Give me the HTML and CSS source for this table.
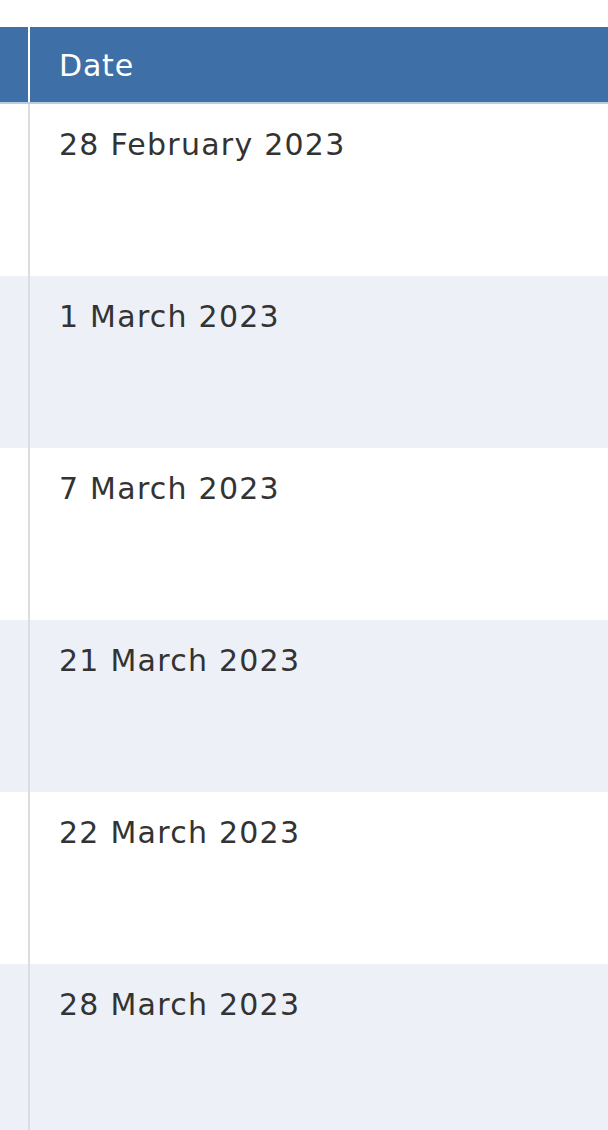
FILE: index.html
```html
<!DOCTYPE html>
<html>
<head>
<meta charset="utf-8">
<link rel="stylesheet" href="styles.css">
</head>
<body>
<div class="page">
  <div class="table">
    <div class="row head">
      <div class="lead"></div>
      <div class="cell">Date</div>
    </div>
    <div class="row"><div class="lead"></div><div class="cell">28 February 2023</div></div>
    <div class="row alt"><div class="lead"></div><div class="cell">1 March 2023</div></div>
    <div class="row"><div class="lead"></div><div class="cell">7 March 2023</div></div>
    <div class="row alt"><div class="lead"></div><div class="cell">21 March 2023</div></div>
    <div class="row"><div class="lead"></div><div class="cell">22 March 2023</div></div>
    <div class="row alt"><div class="lead"></div><div class="cell">28 March 2023</div></div>
  </div>
</div>
</body>
</html>
```
FILE: styles.css
```css
html, body { margin: 0; padding: 0; background: #fff; }
body { font-family: "DejaVu Sans", Verdana, sans-serif; color: #333; }
.page { padding-top: 27px; }
.table { display: flex; flex-direction: column; }
.row { display: flex; height: 172px; background: #fff; }
.row.alt { background: #edf0f7; }
.lead { width: 28px; border-right: 2px solid #dcdde0; flex: none; }
.cell { flex: 1; padding: 23px 0 0 29px; font-size: 30px; line-height: 36px; letter-spacing: 1.25px; }
.row.head { height: 75px; background: #3f6fa7; border-bottom: 2px solid #b9cde3; color: #fff; }
.row.head .lead { border-right-color: #fff; }
.row.head .cell { padding-top: 21px; font-size: 30px; letter-spacing: 0.8px; }
```
